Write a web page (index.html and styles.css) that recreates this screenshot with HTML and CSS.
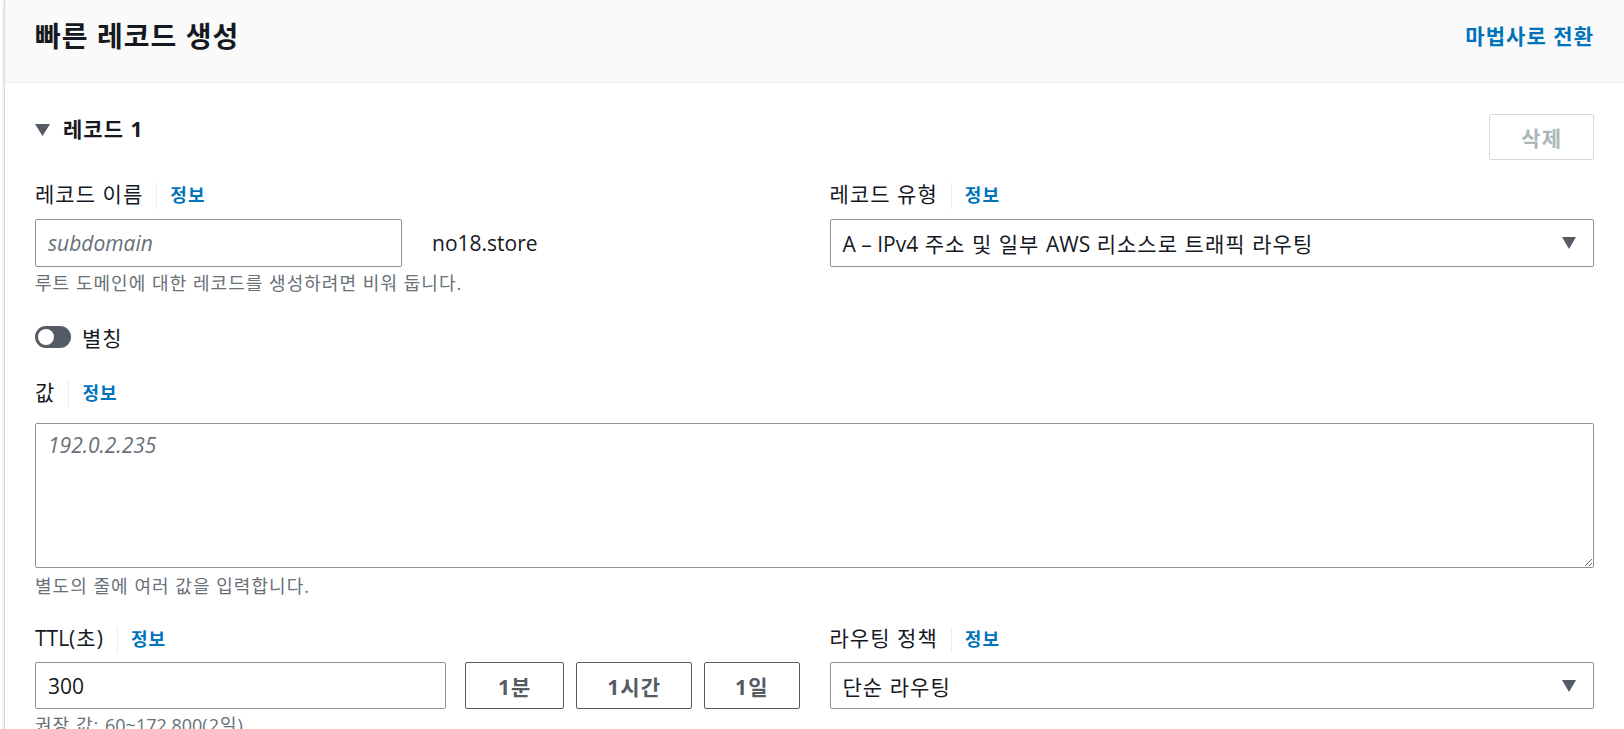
FILE: index.html
```html
<!DOCTYPE html>
<html lang="ko">
<head>
<meta charset="utf-8">
<title>빠른 레코드 생성</title>
<link rel="stylesheet" href="styles.css">
</head>
<body>
<div class="panel">
  <div class="panel-header">
    <h2 class="title">빠른 레코드 생성</h2>
    <a class="switch-link" href="#">마법사로 전환</a>
  </div>
  <div class="panel-body">
    <div class="record-head">
      <div class="record-title">
        <svg class="caret" width="15" height="12" viewBox="0 0 15 12"><path d="M0 0H15L7.5 12Z" fill="#545b64"/></svg>
        <span>레코드 1</span>
      </div>
      <button class="btn-delete" type="button">삭제</button>
    </div>

    <div class="form-grid">
      <div class="field">
        <div class="label-row"><span class="label">레코드 이름</span><span class="sep"></span><a class="info" href="#">정보</a></div>
        <div class="name-row">
          <input class="input input-name" type="text" placeholder="subdomain">
          <span class="suffix">no18.store</span>
        </div>
        <div class="hint">루트 도메인에 대한 레코드를 생성하려면 비워 둡니다.</div>
      </div>

      <div class="field">
        <div class="label-row"><span class="label">레코드 유형</span><span class="sep"></span><a class="info" href="#">정보</a></div>
        <div class="select">
          <span><span class="latin">A – IPv4</span> 주소 및 일부 <span class="latin">AWS</span> 리소스로 트래픽 라우팅</span>
          <svg width="14" height="12" viewBox="0 0 14 12"><path d="M0 0H14L7 12Z" fill="#545b64"/></svg>
        </div>
      </div>

      <div class="field span2">
        <div class="toggle-row">
          <span class="toggle"><span class="toggle-knob"></span></span>
          <span>별칭</span>
        </div>
      </div>

      <div class="field span2 value-field">
        <div class="label-row"><span class="label">값</span><span class="sep"></span><a class="info" href="#">정보</a></div>
        <textarea class="textarea" placeholder="192.0.2.235"></textarea>
        <div class="hint hint-value">별도의 줄에 여러 값을 입력합니다.</div>
      </div>

      <div class="field ttl-field">
        <div class="label-row"><span class="label"><span class="latin">TTL</span>(초)</span><span class="sep"></span><a class="info" href="#">정보</a></div>
        <div class="ttl-row">
          <input class="input input-ttl" type="text" value="300">
          <button class="btn-time btn-min" type="button">1분</button>
          <button class="btn-time" type="button">1시간</button>
          <button class="btn-time" type="button">1일</button>
        </div>
        <div class="hint">권장 값: <span class="latin">60~172,800</span>(2일)</div>
      </div>

      <div class="field ttl-field">
        <div class="label-row"><span class="label">라우팅 정책</span><span class="sep"></span><a class="info" href="#">정보</a></div>
        <div class="select select-routing">
          <span>단순 라우팅</span>
          <svg width="14" height="12" viewBox="0 0 14 12"><path d="M0 0H14L7 12Z" fill="#545b64"/></svg>
        </div>
      </div>
    </div>
  </div>
</div>
</body>
</html>
```

FILE: styles.css
```css
html, body {
  margin: 0;
  padding: 0;
  overflow: hidden;
  background: #ffffff;
}

body {
  width: 1624px;
  height: 729px;
  font-family: "Open Sans", "Noto Sans CJK KR", sans-serif;
  color: #16191f;
  letter-spacing: 0.065em;
}

.latin {
  letter-spacing: 0;
}

.panel {
  margin-left: 5px;
  background: #ffffff;
  box-shadow: -1px 0 0 0 #d5dbdb, -2px 0 2px 0 rgba(0, 28, 36, 0.1);
  min-height: 800px;
}

.panel-header {
  display: flex;
  justify-content: space-between;
  align-items: center;
  height: 38px;
  padding: 17px 30px 27px;
  background: #fafafa;
  border-bottom: 1px solid #eaeded;
}

.title {
  margin: 0;
  font-size: 28px;
  font-weight: 700;
  line-height: 38px;
  color: #16191f;
}

.switch-link {
  font-size: 21px;
  font-weight: 700;
  line-height: 38px;
  color: #0073bb;
  text-decoration: none;
}

.panel-body {
  padding: 31px 30px 0;
}

.record-head {
  display: flex;
  justify-content: space-between;
  align-items: flex-start;
}

.record-title {
  display: flex;
  align-items: center;
  font-size: 21px;
  font-weight: 700;
  line-height: 28px;
  margin-top: 1px;
}

.caret {
  margin-right: 13px;
  margin-top: 2px;
}

.btn-delete {
  height: 46px;
  padding: 0 31px;
  border: 1px solid #d5dbdb;
  border-radius: 2px;
  background: #ffffff;
  color: #aab7b8;
  font-family: inherit;
  font-size: 21px;
  font-weight: 700;
  letter-spacing: inherit;
}

.form-grid {
  display: grid;
  grid-template-columns: 1fr 1fr;
  column-gap: 30px;
  margin-top: 19px;
}

.span2 {
  grid-column: 1 / -1;
}

.label-row {
  display: flex;
  align-items: baseline;
  height: 30px;
  font-size: 21px;
  line-height: 30px;
}

.sep {
  align-self: flex-end;
  width: 1px;
  height: 26px;
  margin: 0 13px 0 13px;
  background: #eaeded;
}

.info {
  font-size: 18px;
  color: #0073bb;
  font-weight: 700;
  text-decoration: none;
}

.input {
  box-sizing: border-box;
  height: 48px;
  padding: 0 12px;
  border: 1px solid #879596;
  border-radius: 2px;
  font-family: inherit;
  font-size: 21px;
  letter-spacing: 0;
  color: #16191f;
  background: #ffffff;
  outline: none;
}

.input::placeholder,
.textarea::placeholder {
  color: #687078;
  font-style: italic;
}

.name-row {
  display: flex;
  align-items: center;
  margin-top: 10px;
}

.input-name {
  width: 367px;
}

.suffix {
  margin-left: 30px;
  font-size: 21px;
  letter-spacing: 0;
}

.hint {
  margin-top: 4px;
  font-size: 18px;
  line-height: 24px;
  color: #687078;
}

.select {
  box-sizing: border-box;
  display: flex;
  justify-content: space-between;
  align-items: center;
  height: 48px;
  margin-top: 10px;
  padding: 0 17px 0 12px;
  border: 1px solid #879596;
  border-radius: 2px;
  font-size: 21px;
}

.toggle-row {
  display: flex;
  align-items: center;
  height: 30px;
  margin-top: 27px;
  font-size: 21px;
}

.toggle {
  box-sizing: border-box;
  display: flex;
  align-items: center;
  width: 36px;
  height: 22px;
  padding: 0 3px;
  margin-right: 11px;
  border-radius: 11px;
  background: #545b64;
}

.toggle-knob {
  width: 16px;
  height: 16px;
  border-radius: 50%;
  background: #ffffff;
}

.value-field {
  margin-top: 25px;
}

.textarea {
  display: block;
  box-sizing: border-box;
  width: 100%;
  height: 145px;
  margin: 16px 0 0;
  padding: 6px 12px;
  border: 1px solid #879596;
  border-radius: 2px;
  font-family: inherit;
  font-size: 21px;
  line-height: 30px;
  letter-spacing: 0;
  color: #16191f;
  outline: none;
}

.hint-value {
  margin-top: 6px;
}

.ttl-field {
  margin-top: 24.5px;
}

.ttl-row {
  display: flex;
  gap: 12px;
  margin-top: 9.5px;
}

.input-ttl {
  flex: 1;
  min-width: 0;
  height: 47px;
  margin-right: 7px;
}

.btn-time {
  height: 47px;
  padding: 0 30px;
  border: 1px solid #545b64;
  border-radius: 2px;
  background: #ffffff;
  color: #545b64;
  font-family: inherit;
  font-size: 21px;
  font-weight: 700;
  letter-spacing: inherit;
}

.btn-min {
  padding: 0 32px;
}

.select-routing {
  height: 47px;
  margin-top: 9.5px;
}
```
